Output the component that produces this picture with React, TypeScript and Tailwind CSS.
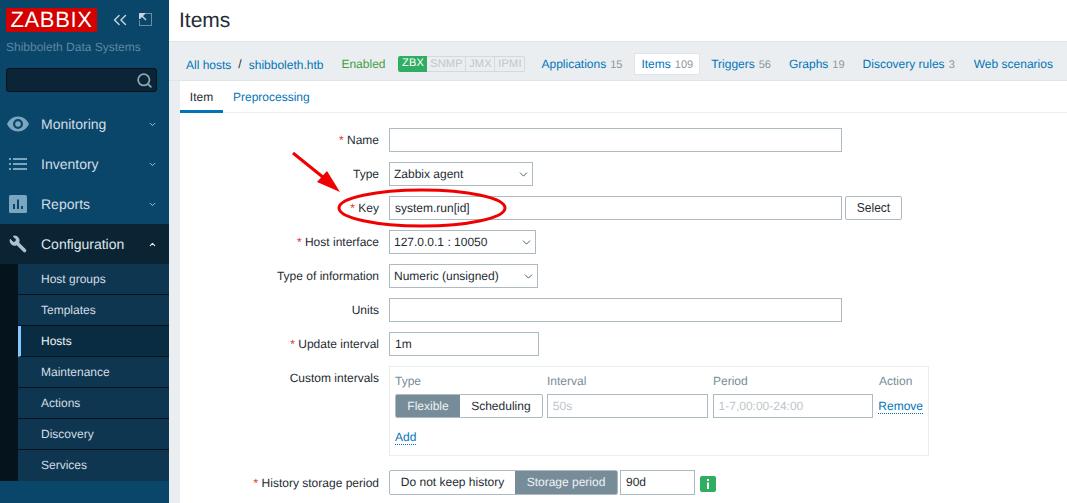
import { ChevronDown, ChevronUp, ChevronsLeft, Search, Wrench } from "lucide-react";
import type { ReactNode } from "react";

const mainMenu = [
  { label: "Monitoring", icon: "eye" },
  { label: "Inventory", icon: "list" },
  { label: "Reports", icon: "chart" },
];
const subMenu = ["Host groups", "Templates", "Hosts", "Maintenance", "Actions", "Discovery", "Services"];

function MenuIcon({ name }: { name: string }) {
  if (name === "eye")
    return (
      <svg width="22" height="16" viewBox="0 0 22 16" className="text-[#7ba6c0]">
        <path
          fill="currentColor"
          fillRule="evenodd"
          d="M11 0.5C6 0.5 2 3.6 0 8c2 4.4 6 7.5 11 7.5S20 12.400 22 8C20 3.600 16 0.500 11 0.500ZM11 3a5 5 0 1 1 0 10a5 5 0 0 1 0-10ZM11 5.200a2.800 2.800 0 1 0 0 5.600a2.800 2.800 0 0 0 0-5.600Z"
        />
      </svg>
    );
  if (name === "list")
    return (
      <svg width="18" height="12" viewBox="0 0 18 12" fill="#7ba6c0">
        <rect x="0" y="0" width="2" height="2" />
        <rect x="4" y="0" width="14" height="2" />
        <rect x="0" y="5" width="2" height="2" />
        <rect x="4" y="5" width="14" height="2" />
        <rect x="0" y="10" width="2" height="2" />
        <rect x="4" y="10" width="14" height="2" />
      </svg>
    );
  return (
    <svg width="18" height="18" viewBox="0 0 18 18">
      <rect width="18" height="18" rx="1.500" fill="#7ba6c0" />
      <rect x="4" y="9" width="2" height="5" fill="#0a466a" />
      <rect x="8" y="4.500" width="2" height="9.500" fill="#0a466a" />
      <rect x="12" y="11" width="2" height="3" fill="#0a466a" />
    </svg>
  );
}

function Sidebar() {
  return (
    <aside className="w-[169px] shrink-0 bg-[#0a466a] flex flex-col">
      <div className="flex items-center pl-[6px] pt-2 h-[24px] box-content">
        <div className="w-[91px] h-[24px] bg-[#d40000] text-white text-[22px] leading-[24px] text-center tracking-[0.6px]">
          ZABBIX
        </div>
        <ChevronsLeft size={22} strokeWidth={1.500} className="ml-[12px] mt-[-1px] text-[#c9d6de]" />
        <svg width="13" height="13" viewBox="0 0 13 13" className="ml-[8px] mt-[-1px] text-[#c9d6de]">
          <path d="M6.500 0.500H12.500V12.500H0.500V6.500" fill="none" stroke="currentColor" strokeDasharray="1 1" />
          <path d="M0.500 0.500H6L0.500 6Z" fill="currentColor" stroke="currentColor" />
          <path d="M3 3L7 7" stroke="currentColor" strokeWidth="1.500" />
        </svg>
      </div>
      <div className="pl-[6px] mt-[5px] h-[20px] leading-[20px] text-xs text-[#5e87a1]">Shibboleth Data Systems</div>
      <div className="mx-[6px] mt-[11px] h-[24px] w-[151px] rounded-[3px] border border-[#04131c] bg-[#0b2536] flex items-center justify-end pr-[3px]">
        <Search size={17} strokeWidth={2.500} className="text-[#8ea6b5]" />
      </div>
      <nav className="mt-[12px]">
        {mainMenu.map((m) => (
          <div key={m.label} className="h-[40px] flex items-center text-sm text-[#d3dde4]">
            <div className="w-[41px] flex justify-center pr-[5px]">
              <MenuIcon name={m.icon} />
            </div>
            <span className="flex-1">{m.label}</span>
            <ChevronDown size={9} strokeWidth={2.500} className="mr-[12px] text-[#b4c6d2]" />
          </div>
        ))}
        <div className="h-[40px] flex items-center text-sm text-[#dfe6eb] bg-[#0a2434]">
          <div className="w-[41px] flex justify-center pr-[5px]">
            <Wrench size={20} strokeWidth={0} fill="#a9c3d4" className="scale-x-[-1]" />
          </div>
          <span className="flex-1">Configuration</span>
          <ChevronUp size={9} strokeWidth={3} className="mr-[12px] text-[#dfe6eb]" />
        </div>
      </nav>
      <div className="flex bg-[#04131c]">
        <div className="w-[18px] shrink-0" />
        <ul className="flex-1">
          {subMenu.map((s) => (
            <li
              key={s}
              className={
                s === "Hosts"
                  ? "h-[31px] leading-[30px] pl-[20px] text-xs text-[#f0f3f5] bg-[#0a2c42] border-l-[3px] border-l-[#84c8ff] border-b border-b-[#04131c]"
                  : "h-[31px] leading-[30px] pl-[23px] text-xs text-[#d3dde4] bg-[#0e3650] border-b border-b-[#04131c] last:border-b-0"
              }
            >
              {s}
            </li>
          ))}
        </ul>
      </div>
    </aside>
  );
}

function Count({ children }: { children: ReactNode }) {
  return <span className="text-[11px] text-[#8a979e] ml-[4px]">{children}</span>;
}

function HostNav() {
  const links = [
    { label: "Applications", n: "15", w: "ml-[16px]" },
    { label: "Triggers", n: "56", w: "ml-[11px]" },
    { label: "Graphs", n: "19", w: "ml-[18px]" },
    { label: "Discovery rules", n: "3", w: "ml-[18px]" },
    { label: "Web scenarios", n: "", w: "ml-[19px]" },
  ];
  return (
    <div className="h-[39px] pt-[6px] pl-[17px] ml-0 flex items-center text-xs whitespace-nowrap border-b border-[#dfe4e7]">
      <a className="text-[#0275b8] mt-[2px]">All hosts</a>
      <span className="mx-[7px] text-[#1f2c33]">/</span>
      <a className="text-[#0275b8] mt-[2px]">shibboleth.htb</a>
      <span className="ml-[18px] text-[#429e47]">Enabled</span>
      <div className="ml-[13px] flex h-[16px] text-[11px] leading-[15px] tracking-[0.2px]">
        <span className="w-[29px] text-center bg-[#2fad62] text-white rounded-l-[2px]">ZBX</span>
        <span className="w-[39px] text-center text-[#bdc6cb] border border-l-0 border-[#d3d9dc]">SNMP</span>
        <span className="w-[29px] text-center text-[#bdc6cb] border border-l-0 border-[#d3d9dc]">JMX</span>
        <span className="w-[30px] text-center text-[#bdc6cb] border border-l-0 border-[#d3d9dc] rounded-r-[2px]">IPMI</span>
      </div>
      <a className={`text-[#0275b8] ${links[0].w}`}>
        {links[0].label}
        <Count>{links[0].n}</Count>
      </a>
      <a className="ml-[12px] h-[22px] leading-[20px] px-[6px] bg-white border border-[#dfe4e7] rounded-[2px] text-[#0275b8]">
        Items
        <Count>109</Count>
      </a>
      {links.slice(1).map((l) => (
        <a key={l.label} className={`text-[#0275b8] ${l.w}`}>
          {l.label}
          {l.n && <Count>{l.n}</Count>}
        </a>
      ))}
    </div>
  );
}

function Field({ label, required, children, top }: { label: string; required?: boolean; children: ReactNode; top?: boolean }) {
  return (
    <div className={`flex ${top ? "items-start" : "items-center"} gap-[10px]`}>
      <label className={`w-[199px] text-right text-xs text-[#1f2c33] ${top ? "mt-[4px]" : ""}`}>
        {required && <span className="text-[#e33734]">* </span>}
        {label}
      </label>
      {children}
    </div>
  );
}

const inputCls = "h-[24px] border border-[#acbbc2] px-[5px] text-xs leading-[22px] text-[#1f2c33] bg-white";

function Select({ value, width }: { value: string; width: string }) {
  return (
    <div className={`h-[24px] border border-[#acbbc2] pl-[4px] pr-[2px] text-xs leading-[22px] text-[#1f2c33] bg-white ${width} flex items-center justify-between`}>
      <span>{value}</span>
      <ChevronDown size={13} strokeWidth={1.500} className="text-[#2f3e47]" />
    </div>
  );
}

function CustomIntervals() {
  return (
    <div className="w-[540px] h-[90px] border border-[#ebeef0] px-[5px] text-xs">
      <div className="flex h-[27px] items-center text-[#768d99]">
        <span className="w-[152px]">Type</span>
        <span className="w-[166px]">Interval</span>
        <span className="w-[166px]">Period</span>
        <span>Action</span>
      </div>
      <div className="flex items-center">
        <div className="flex h-[24px] w-[148px] rounded-[2px] border border-[#acbbc2] overflow-hidden leading-[22px] text-center">
          <span className="w-[64px] bg-[#768d99] text-[#f0f3f5]">Flexible</span>
          <span className="flex-1 text-[#1f2c33]">Scheduling</span>
        </div>
        <div className={`${inputCls} ml-[4px] w-[161px] !text-[#bdc6cb]`}>50s</div>
        <div className={`${inputCls} ml-[5px] w-[161px] !text-[#bdc6cb]`}>1-7,00:00-24:00</div>
        <a className="ml-[5px] text-[#0275b8] border-b border-dotted border-[#0275b8] leading-[14px]">Remove</a>
      </div>
      <a className="inline-block mt-[12px] text-[#0275b8] border-b border-dotted border-[#0275b8] leading-[14px]">Add</a>
    </div>
  );
}

function ItemForm() {
  return (
    <div className="flex flex-col gap-[10px] pt-[15px]">
      <Field label="Name" required>
        <div className={`${inputCls} w-[453px]`} />
      </Field>
      <Field label="Type">
        <Select value="Zabbix agent" width="w-[144px]" />
      </Field>
      <Field label="Key" required>
        <div className="flex gap-[3px]">
          <div className={`${inputCls} w-[453px]`}>system.run[id]</div>
          <button className="h-[24px] w-[57px] border border-[#acbbc2] rounded-[2px] text-xs text-[#1f2c33] bg-white">Select</button>
        </div>
      </Field>
      <Field label="Host interface" required>
        <Select value="127.0.0.1 : 10050" width="w-[147px]" />
      </Field>
      <Field label="Type of information">
        <Select value="Numeric (unsigned)" width="w-[149px]" />
      </Field>
      <Field label="Units">
        <div className={`${inputCls} w-[453px]`} />
      </Field>
      <Field label="Update interval" required>
        <div className={`${inputCls} w-[150px]`}>1m</div>
      </Field>
      <Field label="Custom intervals" top>
        <CustomIntervals />
      </Field>
      <div className="mt-[4px]">
        <Field label="History storage period" required>
          <div className="flex items-center">
            <div className="flex h-[25px] rounded-[2px] border border-[#acbbc2] overflow-hidden text-xs leading-[23px] text-center">
              <span className="w-[125px] text-[#1f2c33]">Do not keep history</span>
              <span className="w-[102px] bg-[#768d99] text-[#f0f3f5]">Storage period</span>
            </div>
            <div className={`${inputCls} !h-[25px] ml-[2px] w-[75px]`}>90d</div>
            <div className="ml-[5px] w-[16px] h-[16px] rounded-[2px] bg-[#2fad62] flex items-center justify-center mt-[2px]">
              <svg width="4" height="10" viewBox="0 0 4 10">
                <rect x="1" y="0" width="2" height="2" fill="white" />
                <rect x="1" y="3.500" width="2" height="6.500" fill="white" />
              </svg>
            </div>
          </div>
        </Field>
      </div>
    </div>
  );
}

// red annotation drawn over the form in the screenshot
function Annotation() {
  return (
    <svg width="240" height="90" viewBox="0 0 240 90" className="absolute left-[280px] top-[145px] pointer-events-none">
      <line x1="13" y1="8" x2="44" y2="33" stroke="#f00000" strokeWidth="3" />
      <polygon points="60,47 37,37 47,26" fill="#f00000" />
      <ellipse cx="142" cy="63" rx="83" ry="18" fill="none" stroke="#f00000" strokeWidth="3" />
    </svg>
  );
}

export default function App() {
  return (
    <div className="relative flex h-[503px] w-[1067px] overflow-hidden bg-[#ebeef0] font-['Liberation_Sans',Arial,sans-serif] [text-rendering:geometricPrecision]">
      <Sidebar />
      <main className="flex-1 min-w-0">
        <header className="h-[41px] bg-white pl-[10px] text-[21px] leading-[41px] text-[#1f2c33]">Items</header>
        <div className="border-t border-[#dfe4e7]">
          <HostNav />
        </div>
        <section className="ml-[11px] bg-white h-[500px]">
          <div className="h-[32px] flex text-xs border-b border-[#ebeef0]">
            <span className="w-[43px] h-[32px] text-center leading-[32px] text-[#1f2c33] border-b-[3px] border-[#0275b8]">Item</span>
            <span className="ml-[10px] leading-[32px] text-[#0275b8]">Preprocessing</span>
          </div>
          <ItemForm />
        </section>
      </main>
      <Annotation />
    </div>
  );
}
